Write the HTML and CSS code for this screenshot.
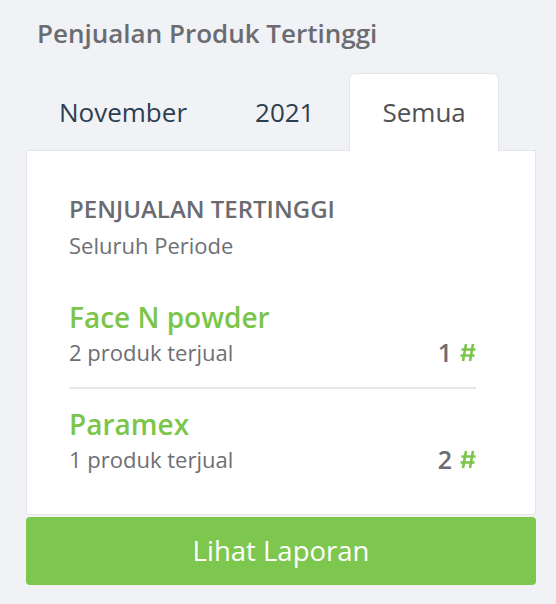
FILE: index.html
```html
<!DOCTYPE html>
<html lang="id">
<head>
<meta charset="utf-8">
<title>Penjualan Produk Tertinggi</title>
<link rel="stylesheet" href="styles.css">
</head>
<body>
<div class="widget">
  <h2 class="title">Penjualan Produk Tertinggi</h2>
  <ul class="tabs">
    <li class="tab">November</li>
    <li class="tab">2021</li>
    <li class="tab active">Semua</li>
  </ul>
  <div class="card">
    <div class="heading">PENJUALAN TERTINGGI</div>
    <div class="period">Seluruh Periode</div>
    <ul class="list">
      <li class="item">
        <div class="info">
          <div class="name">Face N powder</div>
          <div class="sold">2 produk terjual</div>
        </div>
        <div class="rank">1 <svg class="hash" viewBox="0 0 16 19" width="16" height="19"><path d="M6 1 L3 18 M13 1 L10 18 M1.5 6.5 H15.5 M0.5 12.5 H14.5" stroke="#7bc64a" stroke-width="2.6" fill="none"/></svg></div>
      </li>
      <li class="item">
        <div class="info">
          <div class="name">Paramex</div>
          <div class="sold">1 produk terjual</div>
        </div>
        <div class="rank">2 <svg class="hash" viewBox="0 0 16 19" width="16" height="19"><path d="M6 1 L3 18 M13 1 L10 18 M1.5 6.5 H15.5 M0.5 12.5 H14.5" stroke="#7bc64a" stroke-width="2.6" fill="none"/></svg></div>
      </li>
    </ul>
  </div>
  <button class="btn">Lihat Laporan</button>
</div>
</body>
</html>
```
FILE: styles.css
```css
* { box-sizing: border-box; }
html, body { margin: 0; padding: 0; }
body {
  background: #f1f2f6;
  font-family: "Open Sans", "Noto Sans", sans-serif;
  width: 556px;
  height: 604px;
  overflow: hidden;
}
.widget {
  padding: 17px 20px 0 26px;
}
.title {
  margin: 0 0 0 11px;
  font-size: 26px;
  line-height: 32px;
  font-weight: 600;
  color: #6b6c71;
}
.tabs {
  list-style: none;
  margin: 24px 0 0 0;
  padding: 0;
  display: flex;
  border-bottom: 1px solid #e4e5ea;
}
.tab {
  padding: 20px 32px 20px 32px;
  margin-right: 2px;
  font-size: 26px;
  line-height: 36px;
  color: #2d3e50;
  border: 1px solid transparent;
  border-bottom: none;
  border-radius: 6px 6px 0 0;
  margin-bottom: -1px;
}
.tab.active {
  background: #fff;
  border-color: #e4e5ea;
  color: #505155;
  padding-bottom: 21px;
}
.card {
  background: #fff;
  border: 1px solid #e4e5ea;
  border-top: none;
  border-radius: 0 0 4px 4px;
  padding: 44px 59px 40px 42px;
}
.heading {
  font-size: 24px;
  line-height: 28px;
  font-weight: 600;
  color: #6a6b70;
}
.period {
  margin-top: 7px;
  font-size: 22px;
  line-height: 30px;
  color: #6e6f74;
}
.list {
  list-style: none;
  margin: 21px 0 0 0;
  padding: 0;
}
.item {
  display: flex;
  justify-content: space-between;
  align-items: flex-end;
  padding: 19px 0 20px 0;
  border-bottom: 2px solid #e6e7eb;
}
.item + .item {
  padding-top: 18px;
}
.item:last-child {
  border-bottom: none;
  padding-bottom: 0;
}
.name {
  font-size: 28px;
  line-height: 34px;
  font-weight: 600;
  color: #7bc64a;
}
.sold {
  margin-top: 3px;
  font-size: 22px;
  line-height: 30px;
  color: #6e6f74;
}
.rank {
  display: flex;
  align-items: center;
  gap: 8px;
  font-size: 25px;
  line-height: 30px;
  font-weight: 600;
  color: #6b6c71;
}
.hash { display: block; }
.btn {
  display: block;
  width: 100%;
  height: 68px;
  margin-top: 2px;
  border: none;
  border-radius: 4px;
  background: #7ec74e;
  color: #fff;
  font-family: "Open Sans", "Noto Sans", sans-serif;
  font-size: 27.5px;
  line-height: 68px;
  padding: 0;
}
```
